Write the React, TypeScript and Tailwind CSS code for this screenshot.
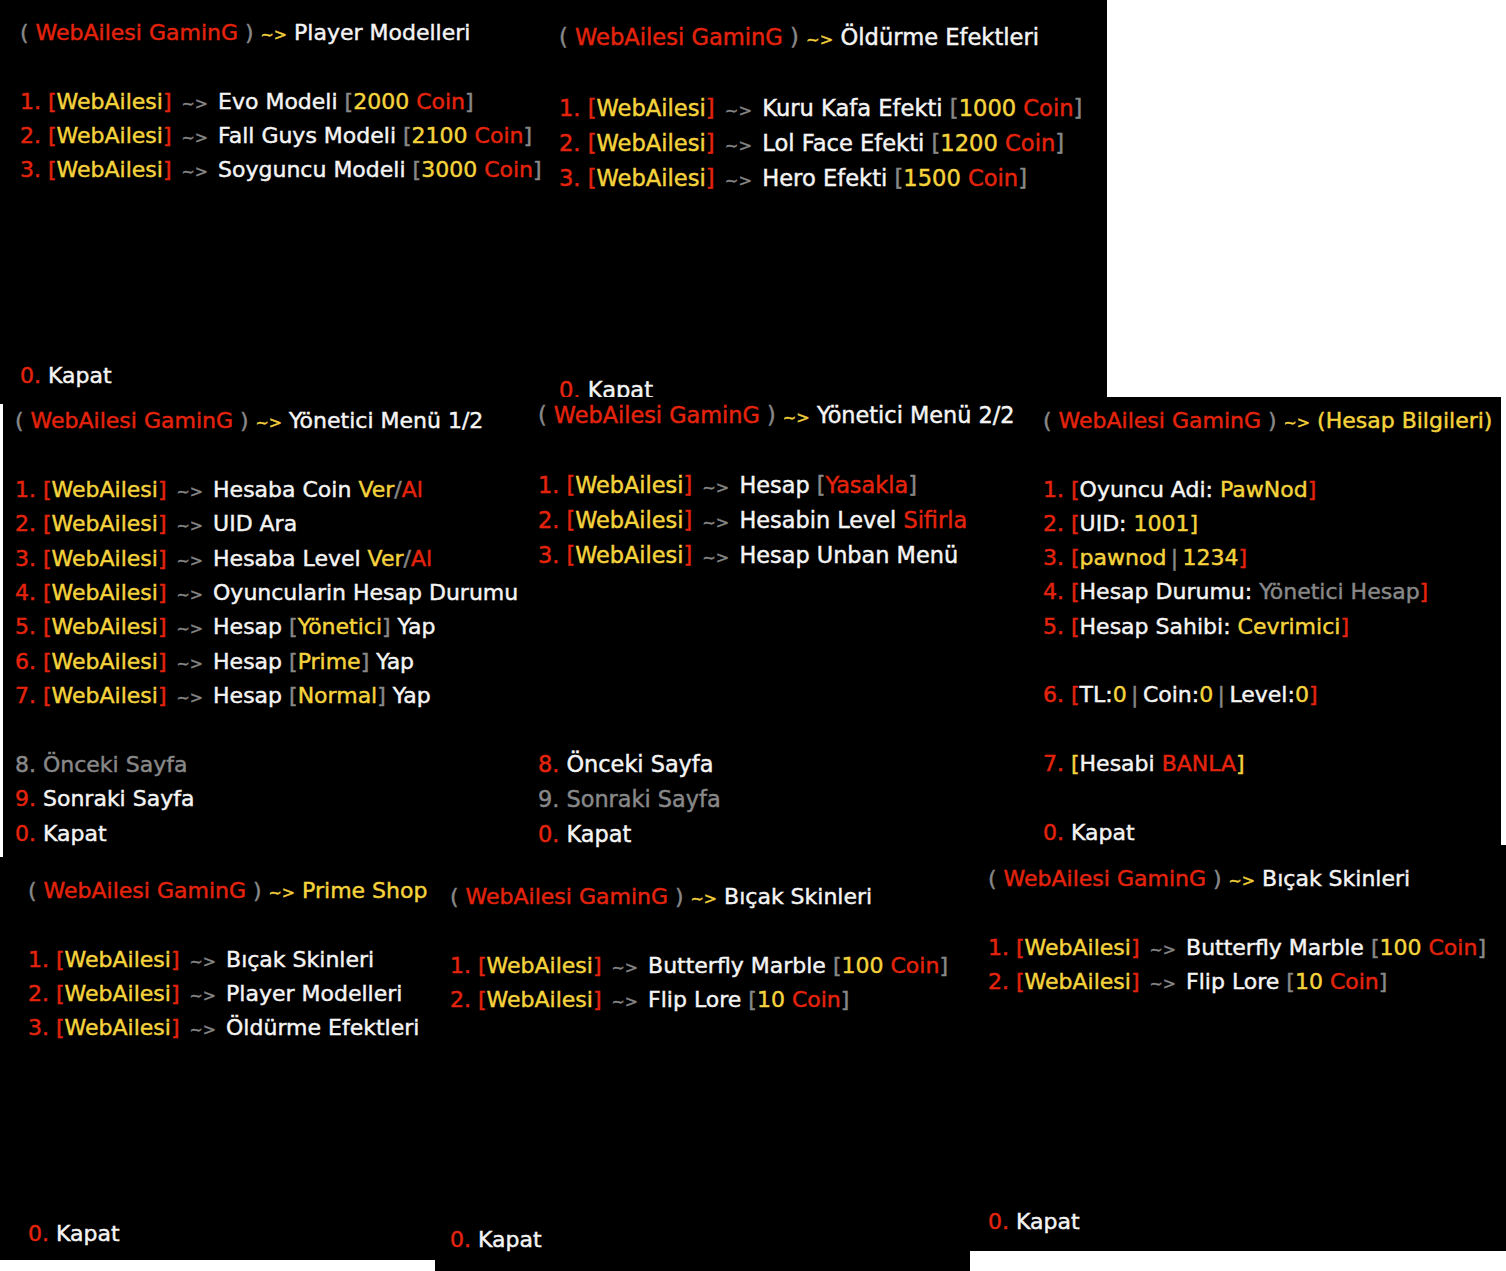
import type { ReactNode } from 'react'

// AMXX style colour codes: \r red, \y yellow, \w white, \d grey
const tone: Record<string, string> = {
  r: 'text-[#e4230d]',
  y: 'text-[#f5d33c]',
  w: 'text-[#f4f4f4]',
  d: 'text-[#888888]',
}

const head = (title: string) => `\\d( \\rWebAilesi GaminG \\d) \\y~> ${title}`
const pick = (n: number, rest: string) => `\\r${n}. [\\yWebAilesi\\r] \\d~> \\w${rest}`
const close = '\\r0. \\wKapat'
const bar = '\u2009|\u2009'

function renderText(text: string, key: string, color: string) {
  // the arrow between parts is drawn a bit smaller than the menu text
  const bits = text.split('~>')
  const out: ReactNode[] = []
  bits.forEach((b, i) => {
    if (i > 0)
      out.push(
        <span
          key={`${key}-a${i}`}
          className={color === 'd' ? 'mx-[3px] text-[0.72em] leading-none' : 'text-[0.72em] leading-none'}
        >
          ~&gt;
        </span>
      )
    if (b) out.push(<span key={`${key}-t${i}`}>{b}</span>)
  })
  return out
}

function MenuLine({ src }: { src: string }) {
  const parts = src.split(/\\([rywd])/)
  const spans: ReactNode[] = []
  let color = 'w'
  parts.forEach((p, i) => {
    if (i % 2 === 1) {
      color = p
      return
    }
    if (!p) return
    spans.push(
      <span key={i} className={tone[color]}>
        {renderText(p, String(i), color)}
      </span>
    )
  })
  return <div className="h-[1lh] shrink-0 whitespace-pre">{spans}</div>
}

function Menu({ className, lines }: { className: string; lines: string[] }) {
  return (
    <section className={`absolute flex flex-col overflow-hidden bg-black ${className}`}>
      {lines.map((l, i) => (
        <MenuLine key={i} src={l} />
      ))}
    </section>
  )
}

const playerModels = [
  head('\\wPlayer Modelleri'),
  '',
  pick(1, 'Evo Modeli \\d[\\y2000 \\rCoin\\d]'),
  pick(2, 'Fall Guys Modeli \\d[\\y2100 \\rCoin\\d]'),
  pick(3, 'Soyguncu Modeli \\d[\\y3000 \\rCoin\\d]'),
  '', '', '', '', '',
  close,
]

const killEffects = [
  head('\\wÖldürme Efektleri'),
  '',
  pick(1, 'Kuru Kafa Efekti \\d[\\y1000 \\rCoin\\d]'),
  pick(2, 'Lol Face Efekti \\d[\\y1200 \\rCoin\\d]'),
  pick(3, 'Hero Efekti \\d[\\y1500 \\rCoin\\d]'),
  '', '', '', '', '',
  close,
]

const adminOne = [
  head('\\wYönetici Menü 1/2'),
  '',
  pick(1, 'Hesaba Coin \\yVer\\d/\\rAl'),
  pick(2, 'UID Ara'),
  pick(3, 'Hesaba Level \\yVer\\d/\\rAl'),
  pick(4, 'Oyuncularin Hesap Durumu'),
  pick(5, 'Hesap \\d[\\yYönetici\\d] \\wYap'),
  pick(6, 'Hesap \\d[\\yPrime\\d] \\wYap'),
  pick(7, 'Hesap \\d[\\yNormal\\d] \\wYap'),
  '',
  '\\d8. Önceki Sayfa',
  '\\r9. \\wSonraki Sayfa',
  close,
]

const adminTwo = [
  head('\\wYönetici Menü 2/2'),
  '',
  pick(1, 'Hesap \\d[\\rYasakla\\d]'),
  pick(2, 'Hesabin Level \\rSifirla'),
  pick(3, 'Hesap Unban Menü'),
  '', '', '', '', '',
  '\\r8. \\wÖnceki Sayfa',
  '\\d9. Sonraki Sayfa',
  close,
]

const account = [
  head('\\y(Hesap Bilgileri)'),
  '',
  '\\r1. [\\wOyuncu Adi: \\yPawNod\\r]',
  '\\r2. [\\wUID: \\y1001]',
  `\\r3. [\\ypawnod\\d${bar}\\y1234\\r]`,
  '\\r4. [\\wHesap Durumu: \\dYönetici Hesap\\r]',
  '\\r5. [\\wHesap Sahibi: \\yCevrimici\\r]',
  '',
  `\\r6. [\\wTL:\\y0\\d${bar}\\wCoin:\\y0\\d${bar}\\wLevel:\\y0\\r]`,
  '',
  '\\r7. \\y[\\wHesabi \\rBANLA\\y]',
  '',
  close,
]

const primeShop = [
  head('\\yPrime Shop'),
  '',
  pick(1, 'Bıçak Skinleri'),
  pick(2, 'Player Modelleri'),
  pick(3, 'Öldürme Efektleri'),
  '', '', '', '', '',
  close,
]

const knives = [
  head('\\wBıçak Skinleri'),
  '',
  pick(1, 'Butterfly Marble \\d[\\y100 \\rCoin\\d]'),
  pick(2, 'Flip Lore \\d[\\y10 \\rCoin\\d]'),
  '', '', '', '', '', '',
  close,
]

export default function App() {
  return (
    <div className="relative h-[1271px] w-[1506px] overflow-hidden bg-white font-['DejaVu_Sans',sans-serif] text-[22px] leading-[34.3px] [-webkit-text-stroke:0.45px_currentColor]">
      <Menu className="left-0 top-0 h-[404px] w-[548px] pl-[20px] pt-[16px]" lines={playerModels} />
      <Menu
        className="left-[548px] top-0 h-[397px] w-[559px] pl-[11px] pt-[20px] text-[22.6px] leading-[35.3px]"
        lines={killEffects}
      />
      <Menu className="left-[3px] top-[404px] h-[454px] w-[524px] pl-[12px] pt-0 leading-[34.4px]" lines={adminOne} />
      <Menu
        className="left-[527px] top-[397px] h-[461px] w-[506px] pl-[11px] pt-px text-[22.4px] leading-[34.9px]"
        lines={adminTwo}
      />
      <Menu className="left-[1033px] top-[397px] h-[448px] w-[468px] pl-[10px] pt-[7px]" lines={account} />
      <Menu className="left-0 top-[857px] h-[403px] w-[435px] pl-[28px] pt-[17px]" lines={primeShop} />
      <Menu className="left-[435px] top-[857px] h-[414px] w-[535px] pl-[15px] pt-[23px]" lines={knives} />
      <Menu className="left-[970px] top-[845px] h-[406px] w-[536px] pl-[18px] pt-[17px]" lines={knives} />
    </div>
  )
}
